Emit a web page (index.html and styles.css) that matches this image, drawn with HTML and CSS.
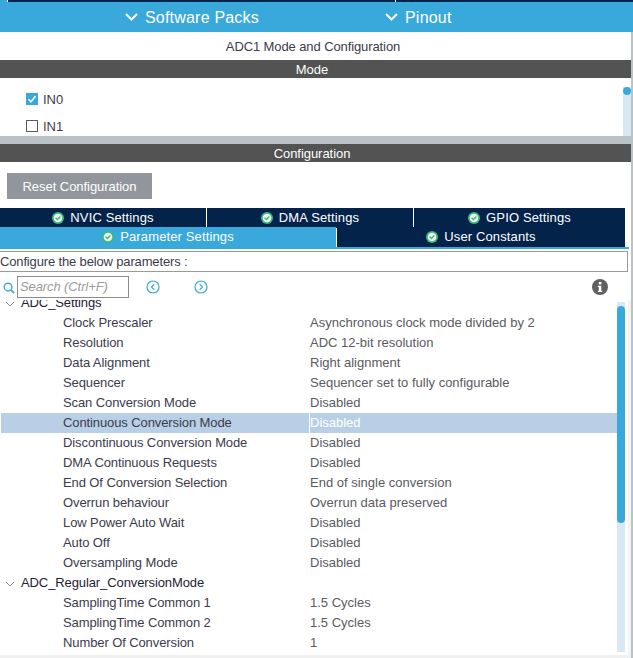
FILE: index.html
```html
<!DOCTYPE html>
<html lang="en">
<head>
<meta charset="utf-8">
<title>ADC1 Mode and Configuration</title>
<link rel="stylesheet" href="styles.css">
</head>
<body>
<div class="page">
  <div class="topstrip">
    <div class="navy first"></div>
    <div class="navy"></div>
  </div>
  <div class="packbar">
    <div class="pack software">
      <svg class="chev" width="13" height="8" viewBox="0 0 13 8"><path d="M1 1l5.500 5.500L12 1" /></svg>
      <span>Software Packs</span>
    </div>
    <div class="pack pinout">
      <svg class="chev" width="13" height="8" viewBox="0 0 13 8"><path d="M1 1l5.500 5.500L12 1" /></svg>
      <span>Pinout</span>
    </div>
  </div>
  <div class="main">
    <div class="title">ADC1 Mode and Configuration</div>
    <div class="sectionbar">Mode</div>
    <div class="modepanel">
      <div class="modelist">
        <label class="modeitem">
          <svg class="box" width="12" height="12" viewBox="0 0 12 12"><rect width="12" height="12" fill="#39a9dc"/><path d="M2.500 6.200l2.500 2.500 4.500-5.500" fill="none" stroke="#fff" stroke-width="1.600"/></svg>
          <span>IN0</span>
        </label>
        <label class="modeitem">
          <svg class="box" width="12" height="12" viewBox="0 0 12 12"><rect x=".5" y=".5" width="11" height="11" fill="#fff" stroke="#5a5a5a"/></svg>
          <span>IN1</span>
        </label>
      </div>
      <div class="modescroll"><div class="modethumb"></div></div>
    </div>
    <div class="divider"></div>
    <div class="sectionbar">Configuration</div>
    <div class="resetrow"><button class="reset">Reset Configuration</button></div>
    <div class="tabs">
      <div class="tabrow three">
        <div class="tab"><svg class="ok" width="12" height="12" viewBox="0 0 12 12"><circle cx="6" cy="6" r="6" fill="#3cb878"/><circle cx="6" cy="6" r="4.300" fill="#eef7f2"/><path d="M3.600 5.800l1.800 1.800 3-3.200" fill="none" stroke="#3cb878" stroke-width="1.400"/></svg>NVIC Settings</div>
        <div class="tab"><svg class="ok" width="12" height="12" viewBox="0 0 12 12"><circle cx="6" cy="6" r="6" fill="#3cb878"/><circle cx="6" cy="6" r="4.300" fill="#eef7f2"/><path d="M3.600 5.800l1.800 1.800 3-3.200" fill="none" stroke="#3cb878" stroke-width="1.400"/></svg>DMA Settings</div>
        <div class="tab"><svg class="ok" width="12" height="12" viewBox="0 0 12 12"><circle cx="6" cy="6" r="6" fill="#3cb878"/><circle cx="6" cy="6" r="4.300" fill="#eef7f2"/><path d="M3.600 5.800l1.800 1.800 3-3.200" fill="none" stroke="#3cb878" stroke-width="1.400"/></svg>GPIO Settings</div>
      </div>
      <div class="tabrow two">
        <div class="tab active"><svg class="ok" width="12" height="12" viewBox="0 0 12 12"><circle cx="6" cy="6" r="6" fill="#3cb878"/><circle cx="6" cy="6" r="4.300" fill="#eef7f2"/><path d="M3.600 5.800l1.800 1.800 3-3.200" fill="none" stroke="#3cb878" stroke-width="1.400"/></svg>Parameter Settings</div>
        <div class="tab"><svg class="ok" width="12" height="12" viewBox="0 0 12 12"><circle cx="6" cy="6" r="6" fill="#3cb878"/><circle cx="6" cy="6" r="4.300" fill="#eef7f2"/><path d="M3.600 5.800l1.800 1.800 3-3.200" fill="none" stroke="#3cb878" stroke-width="1.400"/></svg>User Constants</div>
      </div>
    </div>
    <div class="tabline"></div>
    <div class="configure">Configure the below parameters :</div>
    <div class="searchrow">
      <svg class="searchicon" width="12" height="12" viewBox="0 0 13 13"><circle cx="5.500" cy="5.500" r="4.200" fill="none" stroke="#39a9dc" stroke-width="1.500"/><path d="M8.500 8.500l3.500 3.500" stroke="#39a9dc" stroke-width="2"/></svg>
      <div class="search">Search (Ctrl+F)</div>
      <svg class="nav prev" width="14" height="14" viewBox="0 0 14 14"><circle cx="7" cy="7" r="6" fill="none" stroke="#39a9dc" stroke-width="1.200"/><path d="M8.300 4.300L5.500 7l2.800 2.700" fill="none" stroke="#39a9dc" stroke-width="1.200"/></svg>
      <svg class="nav next" width="14" height="14" viewBox="0 0 14 14"><circle cx="7" cy="7" r="6" fill="none" stroke="#39a9dc" stroke-width="1.200"/><path d="M5.700 4.300L8.500 7l-2.800 2.700" fill="none" stroke="#39a9dc" stroke-width="1.200"/></svg>
      <svg class="info" width="16" height="16" viewBox="0 0 16 16"><circle cx="8" cy="8" r="8" fill="#606060"/><rect x="6.800" y="3" width="2.600" height="2.400" fill="#fff"/><path d="M5.800 6.700h3.500v5.100h1v1.300H5.800v-1.300h1V8H5.800z" fill="#fff"/></svg>
    </div>
    <div class="treearea">
      <div class="tree">
        <div class="row group"><svg class="twist" width="10" height="6" viewBox="0 0 10 6"><path d="M1 1l4 4 4-4"/></svg>ADC_Settings</div>
        <div class="row"><span class="k">Clock Prescaler</span><span class="v">Asynchronous clock mode divided by 2</span></div>
        <div class="row"><span class="k">Resolution</span><span class="v">ADC 12-bit resolution</span></div>
        <div class="row"><span class="k">Data Alignment</span><span class="v">Right alignment</span></div>
        <div class="row"><span class="k">Sequencer</span><span class="v">Sequencer set to fully configurable</span></div>
        <div class="row"><span class="k">Scan Conversion Mode</span><span class="v">Disabled</span></div>
        <div class="row selected"><span class="k">Continuous Conversion Mode</span><span class="v">Disabled</span></div>
        <div class="row"><span class="k">Discontinuous Conversion Mode</span><span class="v">Disabled</span></div>
        <div class="row"><span class="k">DMA Continuous Requests</span><span class="v">Disabled</span></div>
        <div class="row"><span class="k">End Of Conversion Selection</span><span class="v">End of single conversion</span></div>
        <div class="row"><span class="k">Overrun behaviour</span><span class="v">Overrun data preserved</span></div>
        <div class="row"><span class="k">Low Power Auto Wait</span><span class="v">Disabled</span></div>
        <div class="row"><span class="k">Auto Off</span><span class="v">Disabled</span></div>
        <div class="row"><span class="k">Oversampling Mode</span><span class="v">Disabled</span></div>
        <div class="row group"><svg class="twist" width="10" height="6" viewBox="0 0 10 6"><path d="M1 1l4 4 4-4"/></svg>ADC_Regular_ConversionMode</div>
        <div class="row"><span class="k">SamplingTime Common 1</span><span class="v">1.5 Cycles</span></div>
        <div class="row"><span class="k">SamplingTime Common 2</span><span class="v">1.5 Cycles</span></div>
        <div class="row"><span class="k">Number Of Conversion</span><span class="v">1</span></div>
      </div>
      <div class="treescroll"><div class="treethumb"></div></div>
      <div class="treegutter"></div>
    </div>
    <div class="bottomline"></div>
  </div>
</div>
</body>
</html>
```

FILE: styles.css
```css
* { box-sizing: border-box; }
html, body { margin: 0; padding: 0; background: #b8c2c7; }
body { width: 633px; height: 658px; overflow: hidden; font-family: "Liberation Sans", Arial, sans-serif; font-size: 13px; color: #3c3c4c; }
.page { display: flex; flex-direction: column; width: 633px; height: 658px; }

.topstrip { display: flex; height: 2px; background: #39a9dc; padding-left: 7px; flex: none; }
.navy { background: #03234b; height: 2px; flex: 1; border-left: 1px solid #fff; }
.navy.first { flex: none; width: 388px; }

.packbar { height: 30px; background: #39a9dc; display: flex; flex: none; color: #fff; font-size: 16px; letter-spacing: .2px; }
.pack { display: flex; align-items: center; gap: 7px; padding-top: 2px; }
.software { padding-left: 125px; width: 385px; }
.chev { fill: none; stroke: #fff; stroke-width: 2; margin-top: -3px; }

.main { width: 631px; flex: 1; min-height: 0; background: #fff; display: flex; flex-direction: column; }
.title { height: 28px; line-height: 29px; text-align: center; flex: none; padding-right: 5px; letter-spacing: -.1px; }
.sectionbar { height: 18px; line-height: 19px; background: #525352; color: #fff; text-align: center; flex: none; padding-right: 7px; letter-spacing: -.05px; }

.modepanel { height: 58px; display: flex; flex: none; overflow: hidden; }
.modelist { flex: 1; padding: 15px 0 0 26px; display: flex; flex-direction: column; gap: 15px; }
.modeitem { display: flex; align-items: center; gap: 5px; height: 12px; line-height: 14px; }
.modeitem span { padding-top: 2px; }
.modescroll { width: 8px; margin-top: 9px; background: #d9e8f5; }
.modethumb { height: 8px; border-radius: 4px; background: #39a9dc; }
.divider { height: 8px; background: #b8c2c7; flex: none; }

.resetrow { height: 46px; padding: 11px 0 0 7px; flex: none; }
.reset { display: block; width: 145px; height: 26px; background: #90969b; border: 0; color: #fff; font: 13px "Liberation Sans", Arial, sans-serif; letter-spacing: -.05px; padding: 0; }

.tabs { width: 625px; display: flex; flex-direction: column; gap: 1px; flex: none; }
.tabrow { display: grid; gap: 1px; }
.tabrow.three { grid-template-columns: 206px 206px 1fr; height: 18px; }
.tabrow.two { grid-template-columns: 336px 1fr; height: 20px; }
.tab { display: flex; align-items: center; justify-content: center; gap: 6px; background: #03234b; color: #fff; letter-spacing: .13px; line-height: 20px; }
.tab.active { background: #39a9dc; }
.tabline { width: 629px; height: 2px; background: #39a9dc; flex: none; }

.configure { width: 628px; height: 21px; margin-top: 2px; line-height: 19px; border: 1px solid #9a9a9a; border-left: 0; flex: none; letter-spacing: -.15px; white-space: nowrap; }

.searchrow { height: 28px; display: flex; align-items: flex-start; flex: none; padding: 4px 0 0 3px; }
.searchicon { flex: none; margin: 6px 2px 0 0; }
.search { width: 112px; height: 22px; line-height: 20px; border: 1px solid #8c8c8c; padding-left: 2px; color: #9b9b9b; font-style: italic; flex: none; letter-spacing: -.1px; }
.nav { flex: none; margin: 4px 0 0 17px; }
.nav.next { margin-left: 34px; }
.info { flex: none; margin: 3px 23px 0 auto; }

.treearea { flex: 1; min-height: 0; display: flex; }
.tree { flex: 1; min-width: 0; overflow: hidden; padding: 0 0 0 1px; }
.row { height: 20px; display: flex; align-items: center; }
.row:first-child { margin-top: -7px; }
.group { padding: 0 0 2px 20px; position: relative; color: #1f2233; letter-spacing: -.1px; }
.twist { position: absolute; left: 4px; top: 8px; fill: none; stroke: #8a8f94; stroke-width: 1; }
.k { width: 308px; padding-left: 62px; flex: none; align-self: stretch; line-height: 20px; letter-spacing: -.1px; }
.v { flex: 1; line-height: 20px; margin-left: 1px; color: #5a5a62; }
.selected { background: #fff; }
.selected .k { background: #b8cfe6; }
.selected .v { background: #b8cfe6; color: #fff; }

.treescroll { width: 8px; margin: 2px 3px 3px 0; background: #d9e8f5; flex: none; padding-top: 4px; }
.treethumb { height: 217px; border-radius: 4px; background: #39a9dc; }
.treegutter { width: 3px; background: #f4f4f4; flex: none; }
.bottomline { height: 3px; background: #f0f0f0; flex: none; }
```
